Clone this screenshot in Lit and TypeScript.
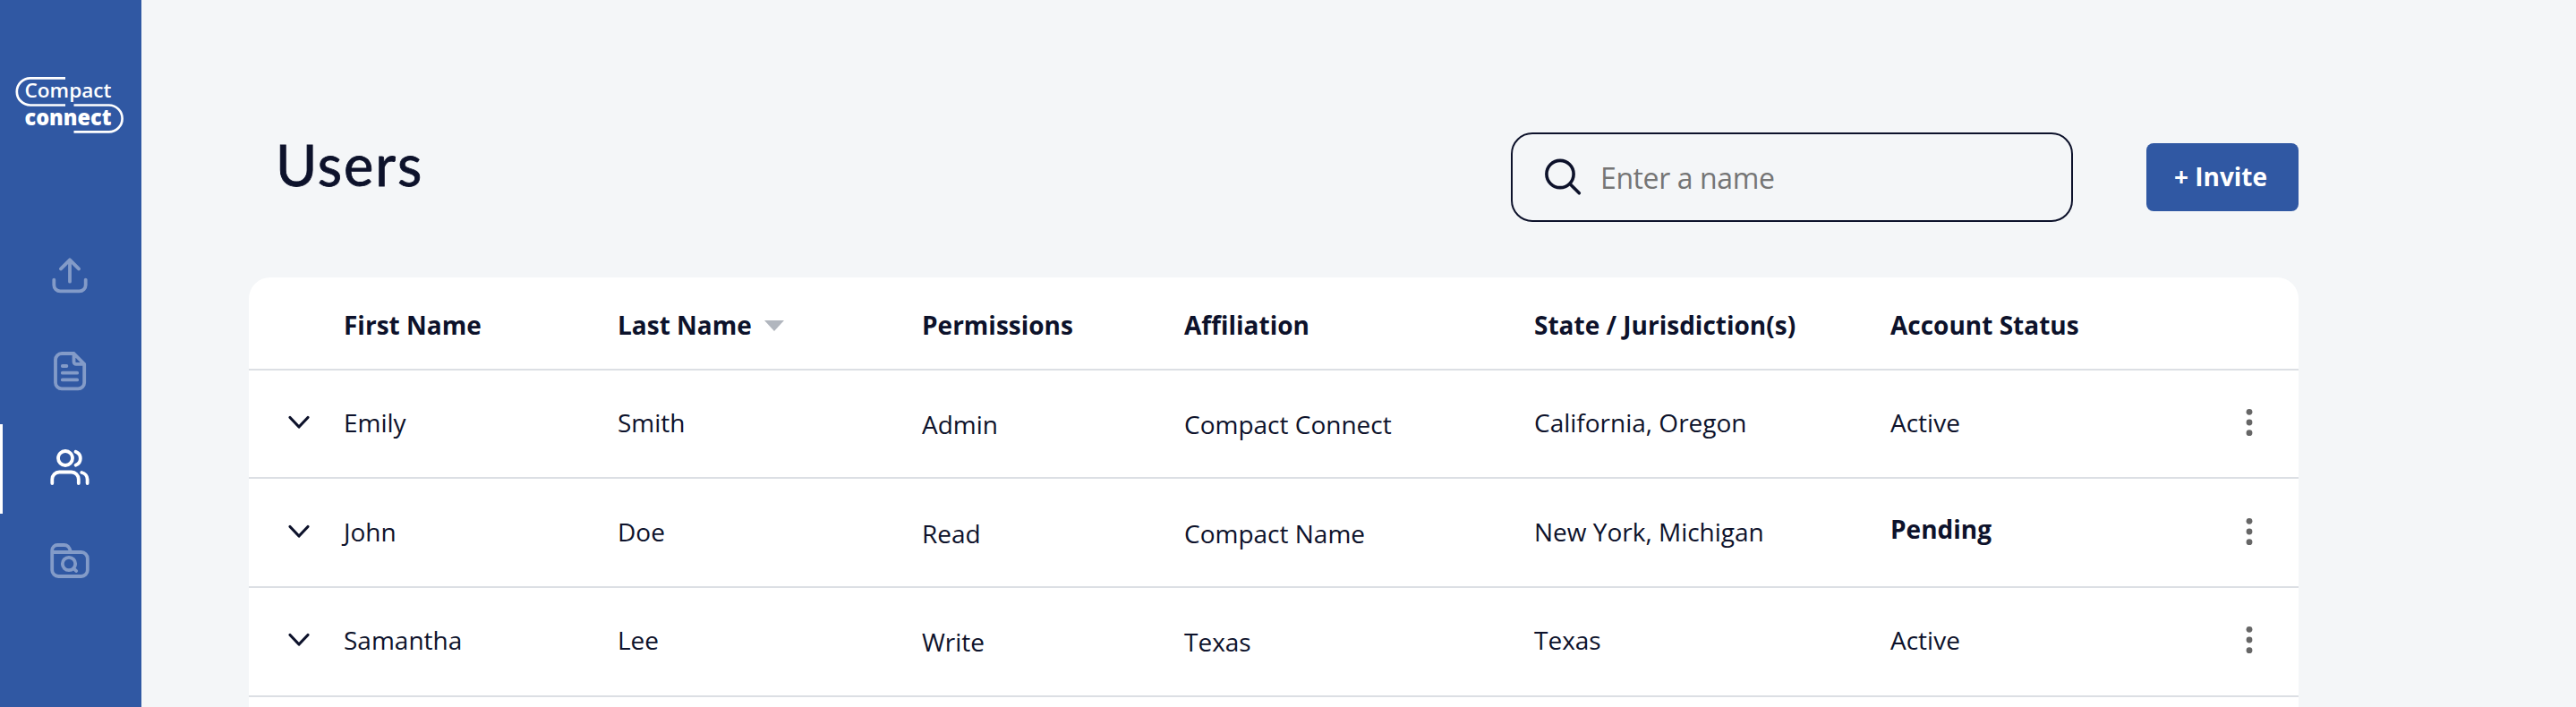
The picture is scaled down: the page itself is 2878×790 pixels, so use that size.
import { LitElement, html, css, svg } from "lit";
import { customElement, state } from "lit/decorators.js";

interface User {
  first: string;
  last: string;
  permissions: string;
  affiliation: string;
  states: string;
  status: "Active" | "Pending";
}

const USERS: User[] = [
  { first: "Emily", last: "Smith", permissions: "Admin", affiliation: "Compact Connect", states: "California, Oregon", status: "Active" },
  { first: "John", last: "Doe", permissions: "Read", affiliation: "Compact Name", states: "New York, Michigan", status: "Pending" },
  { first: "Samantha", last: "Lee", permissions: "Write", affiliation: "Texas", states: "Texas", status: "Active" },
];

const ICONS = {
  upload: svg`<path d="M22 36.700V12.300M12 22.400L22 12.300L32 22.400M4.300 34.600V40.400a7 7 0 0 0 7 7H32.700a7 7 0 0 0 7-7V34.600"/>`,
  document: svg`<path d="M26.500 5H13a7 7 0 0 0-7 7V37.400a7 7 0 0 0 7 7H31.200a7 7 0 0 0 7-7V16.800L26.500 5V14.300a2.500 2.500 0 0 0 2.500 2.500H38.200M13.800 19H18.400M13.800 26.700H30.200M13.800 34.400H30.200"/>`,
  users: svg`<circle cx="17" cy="12" r="8"/><path d="M28.600 4.700a8 8 0 0 1 0 15M2.300 40V35.500a8 8 0 0 1 8-8H23.800a8 8 0 0 1 8 8V40M35.300 28a8 8 0 0 1 6.300 7.600V40"/>`,
  folder: svg`<path d="M2.200 16.800V10a6 6 0 0 1 6-6H15.500c4.500 0 6.200 2.500 7.700 8H34.800a7 7 0 0 1 7 7V32a7 7 0 0 1-7 7H9.200a7 7 0 0 1-7-7ZM2.200 12H23"/><circle cx="21" cy="25" r="7.200"/><path d="M26.500 30.300L29.200 33"/>`,
};

@customElement("side-nav")
class SideNav extends LitElement {
  static styles = css`
    :host { display: block; }
    .nav {
      box-sizing: border-box; width: 158px; height: 790px; background: #3058a3;
      padding-top: 84px; display: flex; flex-direction: column;
    }
    .logo { display: block; height: 68px; width: 158px; margin-bottom: 108px; }
    .logo-line { fill: none; stroke: #fff; stroke-width: 2.700; }
    .logo-text { fill: #fff; font-family: "Open Sans", sans-serif; font-size: 22px; font-weight: 600; }
    .logo-strong { font-size: 24px; font-weight: 800; }
    .item {
      box-sizing: border-box; width: 158px; height: 100px; margin-bottom: 7px;
      border-left: 3px solid transparent; padding-left: 53px; display: flex; align-items: center;
    }
    .active { border-left-color: #fff; }
    .icon {
      width: 44px; height: 50px; fill: none; stroke: #fff; stroke-width: 3.800;
      stroke-linecap: round; stroke-linejoin: round; opacity: 0.4;
    }
    .active .icon { opacity: 1; }
  `;
  render() {
    const entries = [
      { icon: ICONS.upload, box: "0 7 44 50", active: false },
      { icon: ICONS.document, box: "0 2 44 50", active: false },
      { icon: ICONS.users, box: "0 -1 44 50", active: true },
      { icon: ICONS.folder, box: "0 1 44 50", active: false },
    ];
    return html`<nav class="nav">
      <svg class="logo" viewBox="0 84 158 68">
        <path class="logo-line" d="M73 87.300H33.900a15.100 15.100 0 0 0 0 30.200H73M82.500 117.500H121.700a14.900 14.900 0 0 1 0 29.800H82.500" />
        <text class="logo-text" x="27.500" y="109.200" textLength="97" lengthAdjust="spacingAndGlyphs">Compact</text>
        <text class="logo-text logo-strong" x="27.500" y="139.800" textLength="97" lengthAdjust="spacingAndGlyphs">connect</text>
      </svg>
      ${entries.map((e) => html`<a class="item ${e.active ? "active" : ""}"><svg class="icon" viewBox=${e.box}>${e.icon}</svg></a>`)}
    </nav>`;
  }
}

@customElement("user-table")
class UserTable extends LitElement {
  static styles = css`
    :host { display: block; }
    .table { background: #fff; border-radius: 24px 24px 0 0; height: 480px; overflow: hidden; }
    .row {
      box-sizing: border-box; height: 121.800px; border-bottom: 2px solid #dcdfe4;
      display: grid; grid-template-columns: 106px 306px 340px 293px 391px 398px 1fr 59px;
      padding-bottom: 2px; align-items: center; line-height: 38px;
    }
    .row:last-child { padding-bottom: 4px; }
    .head { height: 103.600px; font-weight: 700; padding-bottom: 0; padding-top: 4px; }
    .lower { padding-top: 4px; }
    .toggle { padding-left: 43px; display: flex; }
    .chevron { width: 26px; height: 17px; fill: none; stroke: #0d122b; stroke-width: 3.200; stroke-linecap: round; stroke-linejoin: round; }
    .sortable { display: flex; align-items: center; gap: 14px; }
    .sort { width: 22px; height: 12px; margin-top: 3px; fill: #b1b6be; }
    .pending { font-weight: 700; padding-bottom: 7px; }
    .menu { width: 8px; height: 32px; margin-bottom: 1px; fill: #666; }
  `;
  @state() users = USERS;
  render() {
    return html`<div class="table">
      <div class="row head">
        <span></span><span>First Name</span>
        <span class="sortable">Last Name <svg class="sort" viewBox="0 0 22 12"><path d="M0 0H22L11 12Z" /></svg></span>
        <span>Permissions</span><span>Affiliation</span><span>State / Jurisdiction(s)</span><span>Account Status</span>
      </div>
      ${this.users.map((u) => html`<div class="row">
        <span class="toggle"><svg class="chevron" viewBox="0 0 26 17"><path d="M3 2.500L13 13L23 2.500" /></svg></span>
        <span>${u.first}</span><span>${u.last}</span>
        <span class="lower">${u.permissions}</span><span class="lower">${u.affiliation}</span>
        <span>${u.states}</span><span class=${u.status === "Pending" ? "pending" : ""}>${u.status}</span>
        <svg class="menu" viewBox="0 0 8 32"><circle cx="4" cy="4.300" r="3.400" /><circle cx="4" cy="16" r="3.400" /><circle cx="4" cy="27.700" r="3.400" /></svg>
      </div>`)}
    </div>`;
  }
}

@customElement("app-root")
class AppRoot extends LitElement {
  static styles = css`
    :host {
      display: flex; height: 790px; overflow: hidden; background: #f4f6f8;
      font-family: "Open Sans", sans-serif; font-size: 28px; color: #0d122b;
    }
    .main { margin-left: 120px; width: 2290px; }
    .bar { height: 310px; display: flex; align-items: flex-start; }
    .title {
      margin: 0; padding: 144px 0 0 30px; flex: 1;
      font: 400 63px/80px Lato, sans-serif; letter-spacing: 2px; -webkit-text-stroke: 0.800px #0d122b;
    }
    .search {
      box-sizing: border-box; margin-top: 148px; width: 628px; height: 100px;
      border: 2px solid #0d122b; border-radius: 24px; padding-left: 34px;
      display: flex; align-items: center; gap: 18px; font-size: 32px; letter-spacing: -0.400px; color: #757575;
    }
    .glass { width: 46px; height: 46px; fill: none; stroke: #0d122b; stroke-width: 3.600; stroke-linecap: round; }
    .invite {
      margin: 160px 0 0 82px; width: 170px; height: 76px; border: 0; padding: 0 4px 2px 0;
      border-radius: 8px; background: #3058a3; color: #fff; font: 700 28px "Open Sans", sans-serif;
    }
  `;
  render() {
    return html`<side-nav></side-nav>
      <main class="main">
        <div class="bar">
          <h1 class="title">Users</h1>
          <div class="search">
            <svg class="glass" viewBox="0 0 46 46"><circle cx="19" cy="19.500" r="15.100" /><path d="M30.500 31L40.300 40.800" /></svg>
            <span>Enter a name</span>
          </div>
          <button class="invite">+ Invite</button>
        </div>
        <user-table></user-table>
      </main>`;
  }
}
